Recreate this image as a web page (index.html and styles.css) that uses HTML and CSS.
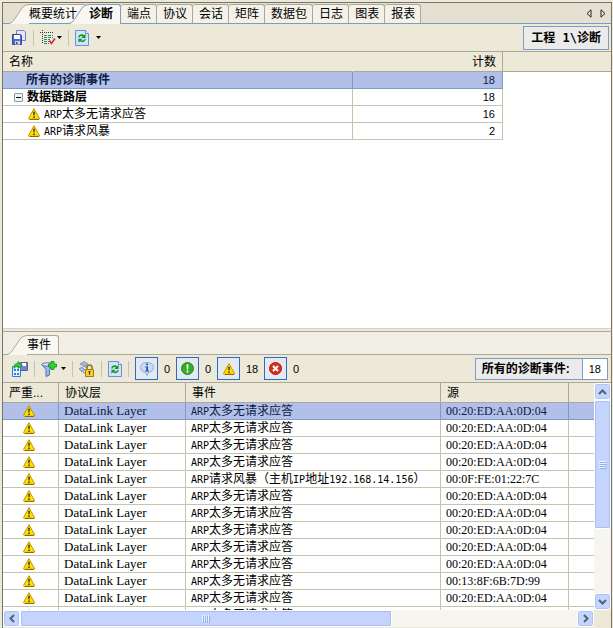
FILE: index.html
```html
<!DOCTYPE html>
<html lang="zh-CN">

<head>
    <meta charset="UTF-8">
    <meta name="viewport" content="width=device-width, initial-scale=1.0">
    <title>诊断</title>
    <link rel="stylesheet" href="styles.css">
</head>

<body>

    <!-- Shared icons -->
    <svg class="symbols" aria-hidden="true">
        <symbol id="warning" viewBox="0 0 12 12">
            <path d="M6 .7 11.4 10.4Q11.5 11.4 10.6 11.4H1.4Q.5 11.4 .6 10.4Z" fill="#ffe100" stroke="#c49000" stroke-width="1" stroke-linejoin="round"/>
            <path d="M2 11.4H10.6L11.4 10.6" fill="none" stroke="#8c6400"/>
            <path d="M5.2 3.8H6.8L6.5 7.6H5.5ZM5.3 8.5H6.7V9.9H5.3Z" fill="#222"/>
        </symbol>
        <symbol id="refresh" viewBox="0 0 14 16">
            <path d="M.5 .5H10.5L13.5 3.5V15.5H.5Z" fill="#d4e3fb" stroke="#6a8fd4"/>
            <path d="M10.5 .5V3.5H13.5" fill="#fff" stroke="#6a8fd4"/>
            <path d="M3.2 7.5C3.5 4.5 7 3.5 9 5.2L10.6 3.8V8H6.4L7.8 6.5C6.4 5.5 4.9 6 4.6 7.5ZM10.8 9C10.5 12 7 13 5 11.3L3.4 12.7V8.7H7.6L6.2 10C7.6 11 9.1 10.5 9.4 9Z" fill="#119a22"/>
        </symbol>
        <symbol id="slant" viewBox="0 0 20 20">
            <path d="M0 20C3 19 5 16.500 7 13L13 4Q15.500 1 20 1V20Z" fill="#f8f7f1"/>
            <path d="M0 19.500C3 19 5 16.500 7 13L13 4Q15.500 .5 20 .5" fill="none" stroke="currentColor"/>
        </symbol>
    </svg>

    <div class="window">

        <!-- Diagnosis pane -->
        <section class="pane pane-top">
            <nav class="tabs">
                <button type="button" class="tab tab-slanted"><svg class="slant"><use href="#slant"/></svg><span>概要统计</span></button>
                <button type="button" class="tab tab-slanted tab-active"><svg class="slant"><use href="#slant"/></svg><span>诊断</span></button>
                <button type="button" class="tab">端点</button>
                <button type="button" class="tab">协议</button>
                <button type="button" class="tab">会话</button>
                <button type="button" class="tab">矩阵</button>
                <button type="button" class="tab">数据包</button>
                <button type="button" class="tab">日志</button>
                <button type="button" class="tab">图表</button>
                <button type="button" class="tab">报表</button>
                <div class="tab-arrows">
                    <button type="button" aria-label="向左"><svg width="6" height="9"><path d="M5 .8V8.200L1 4.500Z" fill="none" stroke="#222"/></svg></button>
                    <button type="button" aria-label="向右"><svg width="6" height="9"><path d="M1 .8V8.200L5 4.500Z" fill="none" stroke="#222"/></svg></button>
                </div>
            </nav>

            <div class="toolbar">
                <button type="button" class="tool" aria-label="保存">
                    <svg width="16" height="16" viewBox="0 0 16 16">
                        <path d="M5.500 .5H13L14.500 2V10.500H5.500Z" fill="#dfe5fb" stroke="#7482c8"/>
                        <path d="M1.500 4.500H9.500L10.500 5.500V14.500H1.500Z" fill="#5566c4" stroke="#36479f"/>
                        <path d="M3 5H9V9H3Z" fill="#fff"/>
                        <path d="M4 11H9V14.500H4Z" fill="#cfd6f4"/>
                        <path d="M5 12H6.500V14H5Z" fill="#36479f"/>
                    </svg>
                </button>
                <span class="separator"></span>
                <button type="button" class="tool tool-menu" aria-label="列">
                    <svg width="16" height="16" viewBox="0 0 16 16">
                        <path d="M0 2.500H13M2.500 0V13" stroke="#333" stroke-dasharray="1 1"/>
                        <path d="M4 5.500H13M4 7.500H13M4 9.500H10M4 11.500H9M4 13.500H9" stroke="#2c8a6c" stroke-dasharray="3 1"/>
                        <path d="M9.500 10.500 11.500 13.500 15 8.500" fill="none" stroke="#e02020" stroke-width="1.500"/>
                    </svg>
                    <svg width="5" height="3"><path d="M0 0H5L2.500 3Z"/></svg>
                </button>
                <span class="separator"></span>
                <button type="button" class="tool tool-menu tool-wide" aria-label="刷新">
                    <svg width="14" height="16"><use href="#refresh"/></svg>
                    <svg width="5" height="3"><path d="M0 0H5L2.500 3Z"/></svg>
                </button>
                <div class="path-box">工程 1\诊断</div>
            </div>

            <div class="table-area">
                <table class="summary">
                    <thead>
                        <tr><th class="name">名称</th><th class="count">计数</th><th class="rest"></th></tr>
                    </thead>
                    <tbody>
                        <tr class="selected"><td><div class="cell level-1 strong">所有的诊断事件</div></td><td class="number">18</td><td class="rest"></td></tr>
                        <tr>
                            <td>
                                <div class="cell level-0 strong">
                                    <button type="button" class="toggle" aria-label="折叠"></button>数据链路层
                                </div>
                            </td>
                            <td class="number">18</td><td class="rest"></td>
                        </tr>
                        <tr><td><div class="cell level-2"><svg class="icon"><use href="#warning"/></svg><span><span class="latin">ARP</span>太多无请求应答</span></div></td><td class="number">16</td><td class="rest"></td></tr>
                        <tr><td><div class="cell level-2"><svg class="icon"><use href="#warning"/></svg><span><span class="latin">ARP</span>请求风暴</span></div></td><td class="number">2</td><td class="rest"></td></tr>
                    </tbody>
                </table>
            </div>
        </section>

        <!-- Events pane -->
        <section class="pane pane-bottom">
            <nav class="tabs tabs-events">
                <button type="button" class="tab tab-slanted"><svg class="slant"><use href="#slant"/></svg><span>事件</span></button>
            </nav>

            <div class="toolbar toolbar-events">
                <button type="button" class="tool" aria-label="导出">
                    <svg width="17" height="16" viewBox="0 0 17 16">
                        <path d="M9.500 1.500H16.500V9.500H9.500Z" fill="#7683c8" stroke="#4c5aa5"/>
                        <path d="M11 2H15V5H11Z" fill="#fff"/>
                        <path d="M1.500 5.500H9.500V15.500H1.500Z" fill="#e8f2ff" stroke="#2d7cd6"/>
                        <path d="M3 8H5V10H3ZM6 8H8V10H6ZM3 12H5V14H3ZM6 12H8V14H6Z" fill="#2d7cd6"/>
                        <path d="M3 6C3 3 5 2.500 7 2.500V.5L11.500 4.200 7 7.500V5.500C5 5.500 4.500 6 3 7.500Z" fill="#3cc43c" stroke="#16851d" stroke-width=".7"/>
                    </svg>
                </button>
                <span class="separator"></span>
                <button type="button" class="tool tool-menu" aria-label="过滤">
                    <svg width="16" height="16" viewBox="0 0 16 16">
                        <path d="M.7 3.500H12.500L8.500 8.500V14L5 15.500V8.500Z" fill="#9dbbe6" stroke="#4a6fb0"/>
                        <ellipse cx="6.500" cy="3.500" rx="5.800" ry="1.700" fill="#dbe8fa" stroke="#4a6fb0"/>
                        <path d="M10 .5H13V3H15.500V6H13V8.500H10V6H7.500V3H10Z" fill="#35d435" stroke="#128a18" stroke-width=".8"/>
                    </svg>
                    <svg width="5" height="3"><path d="M0 0H5L2.500 3Z"/></svg>
                </button>
                <span class="separator"></span>
                <button type="button" class="tool" aria-label="锁定">
                    <svg width="16" height="16" viewBox="0 0 16 16">
                        <path d="M1 3 5 .5 9 3 5 5.500ZM0 8 3 6 6 9 3 11Z" fill="#a9b9dc" stroke="#6c80b4" stroke-width=".7"/>
                        <path d="M5 5 8 7M4 11 7 13" stroke="#6c80b4"/>
                        <path d="M8 9V6.500Q8 4 10.500 4T13 6.500V9" fill="none" stroke="#8f7a20" stroke-width="1.600"/>
                        <path d="M6.500 8.500H14.500V15.500H6.500Z" fill="#f5cf35" stroke="#a57d08"/>
                        <path d="M9.500 10H11.500V11.500H11V14H10V11.500H9.500Z" fill="#5b4500"/>
                    </svg>
                </button>
                <span class="separator"></span>
                <button type="button" class="tool" aria-label="刷新"><svg width="14" height="16"><use href="#refresh"/></svg></button>
                <span class="separator"></span>
                <button type="button" class="filter" aria-label="信息">
                    <svg width="14" height="14" viewBox="0 0 14 14">
                        <path d="M7 .5C11 .5 13.500 2.500 13.500 5.500S11 10 8.500 10.500L7 13.500 5.500 10.500C3 10 .5 8.500 .5 5.500S3 .5 7 .5Z" fill="#c9dcf4" stroke="#8ea9d0"/>
                        <path d="M6.200 1.500H8V3.200H6.200ZM5.300 4.500H8V8.500H9V9.500H5.300V8.500H6.300V5.500H5.300Z" fill="#1f4fae"/>
                    </svg>
                </button>
                <span class="filter-count">0</span>
                <button type="button" class="filter" aria-label="通知">
                    <svg width="13" height="13" viewBox="0 0 13 13">
                        <circle cx="6.500" cy="6.500" r="6" fill="#35ad2c" stroke="#248a20"/>
                        <path d="M5.500 2.500H7.500L7.200 7.500H5.800ZM5.600 8.600H7.400V10.400H5.600Z" fill="#fff"/>
                    </svg>
                </button>
                <span class="filter-count">0</span>
                <button type="button" class="filter" aria-label="警告"><svg class="icon"><use href="#warning"/></svg></button>
                <span class="filter-count filter-count-wide">18</span>
                <button type="button" class="filter" aria-label="错误">
                    <svg width="13" height="13" viewBox="0 0 13 13">
                        <circle cx="6.500" cy="6.500" r="6" fill="#dc2c1c" stroke="#b01c12"/>
                        <path d="M4 4 9 9M9 4 4 9" stroke="#fff" stroke-width="2"/>
                    </svg>
                </button>
                <span class="filter-count">0</span>
                <div class="total"><span class="total-label">所有的诊断事件:</span><span class="total-value">18</span></div>
            </div>

            <div class="events-area">
                <div class="events-view">
                    <table class="events">
                        <thead>
                            <tr><th class="severity">严重...</th><th class="layer">协议层</th><th class="event">事件</th><th class="source">源</th><th></th></tr>
                        </thead>
                        <tbody>
                            <tr class="selected"><td><svg class="icon"><use href="#warning"/></svg></td><td class="layer">DataLink Layer</td><td><span class="latin">ARP</span>太多无请求应答</td><td class="mac">00:20:ED:AA:0D:04</td><td></td></tr>
                            <tr><td><svg class="icon"><use href="#warning"/></svg></td><td class="layer">DataLink Layer</td><td><span class="latin">ARP</span>太多无请求应答</td><td class="mac">00:20:ED:AA:0D:04</td><td></td></tr>
                            <tr><td><svg class="icon"><use href="#warning"/></svg></td><td class="layer">DataLink Layer</td><td><span class="latin">ARP</span>太多无请求应答</td><td class="mac">00:20:ED:AA:0D:04</td><td></td></tr>
                            <tr><td><svg class="icon"><use href="#warning"/></svg></td><td class="layer">DataLink Layer</td><td><span class="latin">ARP</span>太多无请求应答</td><td class="mac">00:20:ED:AA:0D:04</td><td></td></tr>
                            <tr><td><svg class="icon"><use href="#warning"/></svg></td><td class="layer">DataLink Layer</td><td><span class="latin">ARP</span>请求风暴（主机<span class="latin">IP</span>地址<span class="latin">192.168.14.156</span>）</td><td class="mac">00:0F:FE:01:22:7C</td><td></td></tr>
                            <tr><td><svg class="icon"><use href="#warning"/></svg></td><td class="layer">DataLink Layer</td><td><span class="latin">ARP</span>太多无请求应答</td><td class="mac">00:20:ED:AA:0D:04</td><td></td></tr>
                            <tr><td><svg class="icon"><use href="#warning"/></svg></td><td class="layer">DataLink Layer</td><td><span class="latin">ARP</span>太多无请求应答</td><td class="mac">00:20:ED:AA:0D:04</td><td></td></tr>
                            <tr><td><svg class="icon"><use href="#warning"/></svg></td><td class="layer">DataLink Layer</td><td><span class="latin">ARP</span>太多无请求应答</td><td class="mac">00:20:ED:AA:0D:04</td><td></td></tr>
                            <tr><td><svg class="icon"><use href="#warning"/></svg></td><td class="layer">DataLink Layer</td><td><span class="latin">ARP</span>太多无请求应答</td><td class="mac">00:20:ED:AA:0D:04</td><td></td></tr>
                            <tr><td><svg class="icon"><use href="#warning"/></svg></td><td class="layer">DataLink Layer</td><td><span class="latin">ARP</span>太多无请求应答</td><td class="mac">00:20:ED:AA:0D:04</td><td></td></tr>
                            <tr><td><svg class="icon"><use href="#warning"/></svg></td><td class="layer">DataLink Layer</td><td><span class="latin">ARP</span>太多无请求应答</td><td class="mac">00:13:8F:6B:7D:99</td><td></td></tr>
                            <tr><td><svg class="icon"><use href="#warning"/></svg></td><td class="layer">DataLink Layer</td><td><span class="latin">ARP</span>太多无请求应答</td><td class="mac">00:20:ED:AA:0D:04</td><td></td></tr>
                            <tr><td><svg class="icon"><use href="#warning"/></svg></td><td class="layer">DataLink Layer</td><td><span class="latin">ARP</span>太多无请求应答</td><td class="mac">00:20:ED:AA:0D:04</td><td></td></tr>
                        </tbody>
                    </table>
                </div>
                <div class="scroll scroll-y">
                    <button type="button" class="scroll-button" aria-label="向上滚动"><svg width="9" height="6"><path d="M1 5 4.500 1.500 8 5" fill="none" stroke="#4d6185" stroke-width="2"/></svg></button>
                    <div class="thumb"><svg width="8" height="8"><path d="M0 .5H7M0 2.500H7M0 4.500H7M0 6.500H7" stroke="#eef4fe"/><path d="M1 1.500H8M1 3.500H8M1 5.500H8M1 7.500H8" stroke="#8cb0f8"/></svg></div>
                    <div class="track"></div>
                    <button type="button" class="scroll-button" aria-label="向下滚动"><svg width="9" height="6"><path d="M1 1 4.500 4.500 8 1" fill="none" stroke="#4d6185" stroke-width="2"/></svg></button>
                </div>
                <div class="scroll scroll-x">
                    <button type="button" class="scroll-button" aria-label="向左滚动"><svg width="6" height="9"><path d="M5 1 1.500 4.500 5 8" fill="none" stroke="#4d6185" stroke-width="2"/></svg></button>
                    <div class="thumb"><svg width="8" height="8"><path d="M.5 0V7M2.500 0V7M4.500 0V7M6.500 0V7" stroke="#eef4fe"/><path d="M1.500 1V8M3.500 1V8M5.500 1V8M7.500 1V8" stroke="#8cb0f8"/></svg></div>
                    <div class="track"></div>
                    <button type="button" class="scroll-button" aria-label="向右滚动"><svg width="6" height="9"><path d="M1 1 4.500 4.500 1 8" fill="none" stroke="#4d6185" stroke-width="2"/></svg></button>
                </div>
            </div>
        </section>

    </div>

</body>
</html>
```
FILE: styles.css
```css
* {
    box-sizing: border-box;
}

body {
    margin: 0;
    background-color: #ece9d8;
    color: #000;
    font-family: "Liberation Sans", "Noto Sans CJK SC", sans-serif;
    font-size: 12px;
    line-height: 16px;
}

button {
    margin: 0;
    padding: 0;
    border: none;
    background: none;
    color: inherit;
    font: inherit;
    cursor: pointer;
}

svg {
    display: block;
    flex: none;
}

.symbols {
    position: absolute;
    width: 0;
    height: 0;
}

.icon {
    width: 12px;
    height: 12px;
}

.latin {
    font-family: "DejaVu Sans Mono", monospace;
    font-size: 10px;
    line-height: 12px;
}

.window {
    display: flex;
    flex-direction: column;
    height: 100vh;
    padding: 2px 1px 0 2px;
}

.pane {
    display: flex;
    flex-direction: column;
    min-height: 0;
    border: 1px solid #77756a;
    border-bottom: none;
}

.pane-top {
    flex: 1;
}

.pane-bottom {
    height: 297px;
    border-top-color: #aca899;
}

/* Tabs */
.tabs {
    display: flex;
    align-items: flex-end;
    height: 21px;
    padding-left: 6px;
    background-color: #e4e1d3;
    border-bottom: 1px solid #7c9cc0;
}

.tab {
    height: 19px;
    padding: 0 5px 0 6px;
    background-color: #f3f1e8;
    border: 1px solid #aca899;
    border-left: none;
    border-bottom: none;
    border-radius: 3px 3px 0 0;
    line-height: 18px;
    white-space: nowrap;
}

.tab-slanted {
    display: flex;
    padding: 0;
    background: none;
    border: none;
    color: #aca899;
}

.tab-slanted span {
    padding-right: 8px;
    background-color: #f8f7f1;
    border-top: 1px solid #aca899;
    color: #000;
}

.slant {
    width: 20px;
    height: 20px;
}

.tab-active {
    height: 20px;
    margin-left: -16px;
    margin-bottom: -1px;
    color: #7c9cc0;
    font-weight: bold;
    z-index: 1;
}

.tab-active span {
    padding-right: 7px;
    border-top-color: #7c9cc0;
    border-right: 1px solid #7c9cc0;
    border-radius: 0 3px 0 0;
}

.tab-arrows {
    display: flex;
    align-self: center;
    gap: 8px;
    margin-left: auto;
    padding-right: 5px;
}

/* Toolbars */
.toolbar {
    display: flex;
    align-items: center;
    height: 28px;
    padding: 0 2px 0 8px;
    border-bottom: 1px solid #aca899;
}

.separator {
    width: 1px;
    height: 16px;
    margin: 0 6px;
    background-color: #c5c2b2;
}

.tool-menu {
    display: flex;
    align-items: center;
    gap: 1px;
}

.tool-wide {
    gap: 7px;
}

.path-box {
    margin-left: auto;
    padding: 2px 7px;
    background-color: #ebebeb;
    border: 1px solid #7c9cc0;
    font-family: "DejaVu Sans Mono", "Noto Sans CJK SC", monospace;
    font-weight: bold;
    line-height: 18px;
}

/* Tables */
table {
    width: 100%;
    border-collapse: separate;
    border-spacing: 0;
    table-layout: fixed;
}

th {
    height: 20px;
    padding: 0 6px;
    background-color: #ece9d8;
    border-right: 1px solid #aca899;
    border-bottom: 1px solid #aca899;
    font-weight: normal;
    line-height: 18px;
    text-align: left;
    white-space: nowrap;
}

td {
    height: 17px;
    padding: 0 5px;
    border-right: 1px solid #c5c5ae;
    border-bottom: 1px solid #c5c5ae;
    line-height: 16px;
    white-space: nowrap;
}

.selected td {
    background-color: #b2bfe9;
    border-right-color: #7c9cc0;
    border-bottom-color: #7c9cc0;
    color: #0c1c44;
}

.table-area {
    flex: 1;
    background-color: #fff;
    border-bottom: 1px solid #d8d5c5;
    margin-bottom: 2px;
}

.summary .name {
    width: 350px;
}

.summary .count {
    width: 150px;
    text-align: right;
}

.summary th.name {
    border-right-color: #ece9d8;
}

.summary th.rest {
    border-right: none;
}

.summary td.rest {
    background: none;
    border: none;
}

.number {
    padding-right: 7px;
    font-size: 11px;
    text-align: right;
}

.cell {
    display: flex;
    align-items: center;
    gap: 4px;
    height: 16px;
}

.level-0 {
    padding-left: 6px;
}

.level-1 {
    padding-left: 18px;
}

.level-2 {
    padding-left: 20px;
}

.strong {
    font-weight: bold;
}

.toggle {
    display: flex;
    align-items: center;
    justify-content: center;
    width: 9px;
    height: 9px;
    background-color: #f4f3ee;
    border: 1px solid #7c9cc0;
    border-radius: 1px;
}

.toggle::before {
    content: "";
    width: 5px;
    height: 1px;
    background-color: #000;
}

/* Events pane */
.tabs-events {
    height: 23px;
    padding-left: 4px;
    background-color: #f1efe5;
    border-bottom-color: #aca899;
}

.tabs-events span {
    border-right: 1px solid #aca899;
    border-radius: 0 3px 0 0;
    padding-right: 7px;
}

.toolbar-events {
    padding-right: 3px;
}

.toolbar-events .tool-menu {
    gap: 4px;
}

.filter {
    display: flex;
    align-items: center;
    justify-content: center;
    width: 23px;
    height: 23px;
    background-color: #e4e8ef;
    border: 1px solid #316ac5;
}

.filter-count {
    width: 18px;
    font-size: 11px;
    text-align: center;
}

.filter-count-wide {
    width: 24px;
}

.total {
    display: flex;
    margin-left: auto;
    background-color: #ebebeb;
    border: 1px solid #7c9cc0;
    line-height: 20px;
}

.total-label {
    padding: 0 12px 0 6px;
    font-weight: bold;
}

.total-value {
    padding: 0 6px;
    background-color: #fff;
    border-left: 1px solid #7c9cc0;
    font-size: 11px;
}

.events-area {
    display: grid;
    grid-template-columns: 1fr 17px;
    grid-template-rows: 1fr 17px;
    flex: 1;
    min-height: 0;
    padding-bottom: 1px;
}

.events-view {
    overflow: hidden;
    background-color: #fff;
}

.events th {
    border-right-color: #aca899;
}

.events th:last-child,
.events td:last-child {
    border-right: none;
}

.events .severity {
    width: 56px;
}

.events .layer {
    width: 127px;
}

.events .event {
    width: 255px;
}

.events .source {
    width: 128px;
}

.events td:first-child {
    padding-right: 9px;
}

.events td .icon {
    margin: 0 auto;
}

.events td.layer {
    font-family: "Liberation Serif", serif;
    font-size: 13px;
}

.events td.mac {
    font-family: "Liberation Serif", serif;
}

/* Scroll bars */
.scroll {
    display: flex;
    background-color: #f6f5f0;
}

.scroll-y {
    flex-direction: column;
}

.scroll-button {
    display: flex;
    align-items: center;
    justify-content: center;
    flex: none;
    width: 17px;
    height: 17px;
    background-color: #c6d5fc;
    border: 1px solid #fff;
    border-radius: 3px;
    box-shadow: inset 0 0 0 1px #b0c3f2;
}

.thumb {
    display: flex;
    align-items: center;
    justify-content: center;
    background-color: #c4d4fc;
    border: 1px solid #fff;
    border-radius: 2px;
    box-shadow: inset 0 0 0 1px #a9bff0;
}

.track {
    flex: 1;
}

.scroll-y .thumb {
    height: 67%;
    flex: 0 0 auto;
    max-height: 129px;
}

.scroll-x .thumb {
    width: 63%;
}
```
